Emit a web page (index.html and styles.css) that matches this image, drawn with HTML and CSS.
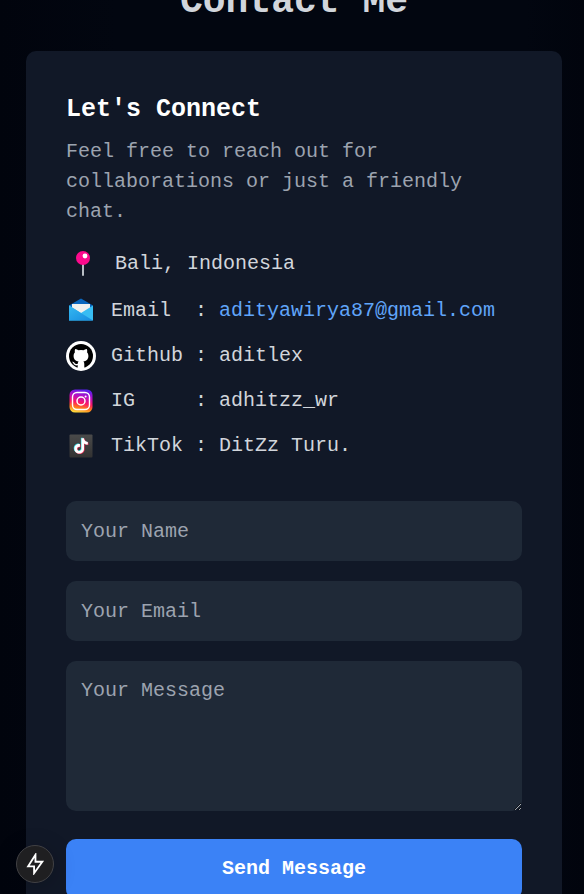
FILE: index.html
```html
<!DOCTYPE html>
<html lang="en">
<head>
<meta charset="utf-8">
<meta name="viewport" content="width=device-width, initial-scale=1">
<title>Contact Me</title>
<link rel="stylesheet" href="styles.css">
</head>
<body>
<main class="contact">
  <h1 class="contact-title">Contact Me</h1>
  <section class="card">
    <h2 class="card-title">Let's Connect</h2>
    <p class="card-text">Feel free to reach out for collaborations or just a friendly chat.</p>
    <ul class="links">
      <li class="location">
        <svg class="pin" viewBox="0 0 34 34" aria-hidden="true">
          <path d="M17 16v12" stroke="#b9bfc6" stroke-width="2" stroke-linecap="round"/>
          <circle cx="17" cy="11" r="7" fill="#fb0a8c"/>
          <circle cx="19" cy="9" r="2.400" fill="#fff"/>
        </svg>
        <span>Bali, Indonesia</span>
      </li>
      <li>
        <svg class="icon" viewBox="0 0 30 30" aria-hidden="true">
          <defs><linearGradient id="mail" x1="0" y1="0" x2="1" y2="1"><stop offset="0" stop-color="#35b9f1"/><stop offset="1" stop-color="#168be0"/></linearGradient></defs>
          <path d="M3 9.500 15 2.500 27 9.500v6H3z" fill="#0b67bd"/>
          <path d="M6 8h18v9H6z" fill="#f1f1ee"/>
          <path d="M3 9.500l12 7.500L27 9.500v15H3z" fill="#38bdf3"/>
          <path d="M3 9.500 27 24.500H3z" fill="url(#mail)"/>
        </svg>
        <span class="entry">Email  : <a href="mailto:adityawirya87@gmail.com">adityawirya87@gmail.com</a></span>
      </li>
      <li>
        <svg class="icon" viewBox="0 0 30 30" aria-hidden="true">
          <circle cx="15" cy="15" r="15" fill="#fff"/>
          <circle cx="15" cy="15" r="12" fill="#000"/>
          <path fill="#fff" d="M9.200 8c1.400 0 2.600.8 3.300 1.300a11 11 0 0 1 5 0C18.200 8.800 19.400 8 20.800 8c.6 1.400.5 2.500.2 3.300 1 1.100 1.400 2.300 1.400 3.800 0 3.700-2.300 5.100-5 5.500.6.600.9 1.400.9 2.400v4.500h-6.600V24.300c-2.400.5-3.700-.5-4.400-2.100-.3-.7-.8-1.100-1.300-1.500 1.900-.4 2.500 1.500 3.400 2 .8.400 1.600.3 2.300 0 .1-.9.400-1.600.9-2.100-2.700-.4-5-1.800-5-5.500 0-1.500.4-2.700 1.400-3.800-.3-.8-.4-1.900.2-3.300z"/>
        </svg>
        <span class="entry">Github : aditlex</span>
      </li>
      <li>
        <svg class="icon" viewBox="0 0 30 30" aria-hidden="true">
          <defs>
            <linearGradient id="insta" x1="0.600" y1="0" x2="0.400" y2="1"><stop offset="0" stop-color="#5520ef"/><stop offset=".3" stop-color="#b60ec4"/><stop offset=".58" stop-color="#fa1766"/><stop offset=".8" stop-color="#ff7a1a"/><stop offset="1" stop-color="#ffd83b"/></linearGradient>
          </defs>
          <rect x="3.500" y="3.500" width="23" height="23" rx="5.500" fill="url(#insta)"/>
          <rect x="6.500" y="6.500" width="17" height="17" rx="4.500" fill="none" stroke="#fff" stroke-width="1.400"/>
          <circle cx="15" cy="15" r="4" fill="none" stroke="#fff" stroke-width="1.500"/>
          <circle cx="19.600" cy="10.400" r="1" fill="#fff"/>
        </svg>
        <span class="entry">IG     : adhitzz_wr</span>
      </li>
      <li>
        <svg class="icon" viewBox="0 0 30 30" aria-hidden="true">
          <defs>
            <linearGradient id="tile" x1="0" y1="0" x2="0" y2="1"><stop offset="0" stop-color="#4a4a4a"/><stop offset="1" stop-color="#323232"/></linearGradient>
            <path id="note" d="M12.600 0h3.900c.2 3.200 2.500 5.600 6 6v4c-2.200 0-4.200-.7-5.900-1.900v8.400c0 4.400-3.500 7.500-7.600 7.500s-7.500-3.300-7.500-7.500c0-4.800 4.300-8.200 8.700-7.300v4.400c-2.300-.7-4.500.8-4.500 3 0 1.900 1.600 3.300 3.400 3.300 1.900 0 3.500-1.400 3.500-3.500z"/>
          </defs>
          <rect x="3.500" y="3.500" width="23" height="23" rx="1" fill="url(#tile)"/>
          <use href="#note" transform="translate(6.800 6.700) scale(.64)" fill="#35dce5"/>
          <use href="#note" transform="translate(8 7.600) scale(.64)" fill="#f3345d"/>
          <use href="#note" transform="translate(7.400 7.200) scale(.64)" fill="#fff"/>
        </svg>
        <span class="entry">TikTok : DitZz Turu.</span>
      </li>
    </ul>
    <form class="form">
      <input class="field" type="text" aria-label="Your Name" placeholder="Your Name">
      <input class="field" type="email" aria-label="Your Email" placeholder="Your Email">
      <textarea class="field message" aria-label="Your Message" placeholder="Your Message"></textarea>
      <button class="send" type="submit">Send Message</button>
    </form>
  </section>
</main>
<button class="badge" type="button" aria-label="Quick actions">
  <svg viewBox="0 0 24 24" aria-hidden="true"><path d="M12.500 2 4.500 14.500h6.500V22L20 9.500h-7.500z" fill="none" stroke="#fff" stroke-width="2"/></svg>
</button>
</body>
</html>
```

FILE: styles.css
```css
* {
  box-sizing: border-box;
}

body {
  margin: 0;
  height: 100vh;
  overflow: hidden;
  background: linear-gradient(to right, #01040d, #020610 20%, #020610 90%, #01040d);
  color: #d1d5db;
  font: 20px/30px "Liberation Mono", monospace;
}

h1, h2, p, ul {
  margin: 0;
  padding: 0;
}

.contact {
  display: flow-root;
  padding: 0 22px 0 26px;
}

/* The heading sits partly above the visible area. */
.contact-title {
  margin: -20px 0 27px;
  font-size: 38px;
  line-height: 44px;
  text-align: center;
}

.card {
  padding: 41px 40px 40px;
  border-radius: 10px;
  background: #111827;
}

.card-title {
  margin-bottom: 10px;
  color: #fff;
  font-size: 25px;
  line-height: 35px;
}

.card-text {
  color: #9ca3af;
}

.links {
  display: grid;
  gap: 15px;
  margin: 20px 0 40px;
  list-style: none;
}

.links li {
  display: flex;
  align-items: center;
  gap: 15px;
}

.entry {
  white-space: pre;
}

.icon {
  width: 30px;
  height: 30px;
}

.pin {
  width: 34px;
  height: 34px;
}

.links a {
  color: #60a5fa;
  text-decoration: none;
}

.form {
  display: grid;
  gap: 20px;
}

.field {
  display: block;
  width: 100%;
  height: 60px;
  padding: 15px;
  border: 0;
  border-radius: 10px;
  background: #1f2937;
  color: #fff;
  font: inherit;
}

.field::placeholder {
  color: #9ca3af;
}

.message {
  height: 150px;
  margin-bottom: 8px;
  resize: vertical;
}

.send {
  height: 60px;
  border: 0;
  border-radius: 10px;
  background: #3b82f6;
  color: #fff;
  font: inherit;
  font-weight: bold;
}

.badge {
  position: fixed;
  left: 16px;
  bottom: 11px;
  display: grid;
  place-items: center;
  width: 38px;
  height: 38px;
  padding: 0;
  border: 1px solid #414144;
  border-radius: 50%;
  background: #1f1f21;
  box-shadow: 0 4px 24px rgba(0, 0, 0, 0.2);
}

.badge svg {
  width: 22px;
  height: 22px;
}
```
